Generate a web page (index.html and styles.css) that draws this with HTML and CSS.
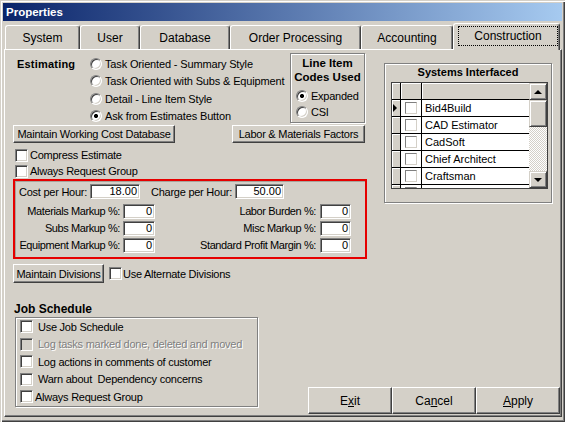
FILE: index.html
```html
<!DOCTYPE html>
<html>
<head>
<meta charset="utf-8">
<title>Properties</title>
<link rel="stylesheet" href="styles.css">
</head>
<body>
<div class="window">
  <div class="titlebar">Properties</div>
  <div class="tabs">
    <div class="tab tab-system">System</div>
    <div class="tab tab-user">User</div>
    <div class="tab tab-database">Database</div>
    <div class="tab tab-order">Order Processing</div>
    <div class="tab tab-accounting">Accounting</div>
    <div class="tab tab-construction active"><span class="focus">Construction</span></div>
  </div>
  <div class="panel">
    <div class="top">
      <div class="left">
        <div class="est-row">
          <div class="est-label">Estimating</div>
          <div class="radio-list">
            <div class="opt"><span class="radio"></span>Task Oriented - Summary Style</div>
            <div class="opt"><span class="radio"></span>Task Oriented with Subs &amp; Equipment</div>
            <div class="opt"><span class="radio"></span>Detail - Line Item Style</div>
            <div class="opt"><span class="radio checked"></span>Ask from Estimates Button</div>
          </div>
          <div class="lineitem">
            <div class="lineitem-title">Line Item<br>Codes Used</div>
            <div class="opt li-opt"><span class="radio checked"></span>Expanded</div>
            <div class="opt li-opt"><span class="radio"></span>CSI</div>
          </div>
        </div>
        <div class="btn-row">
          <div class="btn btn-wcd">Maintain Working Cost Database</div>
          <div class="btn btn-lmf">Labor &amp; Materials Factors</div>
        </div>
        <div class="check-row first"><span class="cb"></span>Compress Estimate</div>
        <div class="check-row"><span class="cb"></span>Always Request Group</div>
        <div class="rates">
          <div class="rate-row1">
            <span class="lbl-cost">Cost per Hour:</span>
            <span class="input in-cost">18.00</span>
            <span class="lbl-charge">Charge per Hour:</span>
            <span class="input in-charge">50.00</span>
          </div>
          <div class="rate-grid">
            <span class="lbl-a">Materials Markup %:</span>
            <span class="input">0</span>
            <span class="lbl-b">Labor Burden %:</span>
            <span class="input">0</span>
            <span class="lbl-a">Subs Markup %:</span>
            <span class="input">0</span>
            <span class="lbl-b">Misc Markup %:</span>
            <span class="input">0</span>
            <span class="lbl-a">Equipment Markup %:</span>
            <span class="input">0</span>
            <span class="lbl-b">Standard Profit Margin %:</span>
            <span class="input">0</span>
          </div>
        </div>
        <div class="div-row">
          <div class="btn btn-div">Maintain Divisions</div>
          <span class="cb cb-div"></span>Use Alternate Divisions
        </div>
      </div>
      <div class="right">
        <div class="sys-title">Systems Interfaced</div>
        <div class="grid">
          <div class="cells">
            <div class="grow head"><span class="c-ind"></span><span class="c-chk"></span><span class="c-name"></span></div>
            <div class="grow"><span class="c-ind"><span class="arrow"></span></span><span class="c-chk"><span class="gcb"></span></span><span class="c-name">Bid4Build</span></div>
            <div class="grow"><span class="c-ind"></span><span class="c-chk"><span class="gcb"></span></span><span class="c-name">CAD Estimator</span></div>
            <div class="grow"><span class="c-ind"></span><span class="c-chk"><span class="gcb"></span></span><span class="c-name">CadSoft</span></div>
            <div class="grow"><span class="c-ind"></span><span class="c-chk"><span class="gcb"></span></span><span class="c-name">Chief Architect</span></div>
            <div class="grow"><span class="c-ind"></span><span class="c-chk"><span class="gcb"></span></span><span class="c-name">Craftsman</span></div>
            <div class="grow"><span class="c-ind"></span><span class="c-chk"><span class="gcb"></span></span><span class="c-name"></span></div>
          </div>
          <div class="scroll">
            <div class="sb-btn"><span class="tri-up"></span></div>
            <div class="sb-thumb"></div>
            <div class="sb-track"></div>
            <div class="sb-btn"><span class="tri-down"></span></div>
          </div>
        </div>
      </div>
    </div>
    <div class="bottom">
      <div class="job">
        <div class="job-label">Job Schedule</div>
        <div class="jobbox">
          <div class="job-row"><span class="cb"></span>Use Job Schedule</div>
          <div class="job-row disabled"><span class="cb"></span>Log tasks marked done, deleted and moved</div>
          <div class="job-row"><span class="cb"></span>Log actions in comments of customer</div>
          <div class="job-row"><span class="cb"></span>Warn about &nbsp;Dependency concerns</div>
          <div class="job-row tight"><span class="cb"></span>Always Request Group</div>
        </div>
      </div>
      <div class="dlg-buttons">
        <div class="dbtn">E<u>x</u>it</div>
        <div class="dbtn">Ca<u>n</u>cel</div>
        <div class="dbtn"><u>A</u>pply</div>
      </div>
    </div>
  </div>
</div>
</body>
</html>
```

FILE: styles.css
```css
* { box-sizing: border-box; }
html, body { margin: 0; padding: 0; }
body {
  width: 565px;
  height: 422px;
  overflow: hidden;
  background: #d4d0c8;
  font-family: "Liberation Sans", Arial, sans-serif;
  font-size: 11px;
  letter-spacing: -0.25px;
  color: #000;
}
.window {
  width: 565px;
  height: 422px;
  background: #d4d0c8;
  padding: 3px 3px 5px 3px;
  display: flex;
  flex-direction: column;
  box-shadow: inset 1px 1px 0 #d4d0c8, inset 2px 2px 0 #fff, inset -1px -1px 0 #404040, inset -2px -2px 0 #808080;
}
.titlebar {
  flex: none;
  height: 18px;
  line-height: 18px;
  background: linear-gradient(to right, #0a246a, #a6caf0);
  color: #fff;
  font-weight: bold;
  font-size: 11.5px;
  letter-spacing: 0;
  padding-left: 3px;
}
.tabs {
  flex: none;
  display: flex;
  align-items: flex-end;
  height: 26px;
  margin-top: 2px;
  padding-left: 2px;
}
.tab {
  height: 24px;
  display: flex;
  align-items: center;
  justify-content: center;
  font-size: 12px;
  letter-spacing: 0;
  border-top: 1px solid #fff;
  border-left: 1px solid #fff;
  border-right: 1px solid #404040;
  box-shadow: inset -1px 0 0 #808080;
  border-radius: 3px 3px 0 0;
  padding-top: 1px;
}
.tab-system { width: 75px; }
.tab-user { width: 60px; }
.tab-database { width: 90px; }
.tab-order { width: 131px; }
.tab-accounting { width: 92px; }
.tab-construction { width: 107px; }
.tab.active {
  height: 27px;
  margin-bottom: -1px;
  position: relative;
  z-index: 1;
  background: #d4d0c8;
  align-items: flex-start;
  justify-content: flex-start;
  padding-top: 0;
}
.focus {
  margin: 2px 0 0 4px;
  width: 100px;
  height: 20px;
  border: 1px dotted #000;
  display: flex;
  align-items: center;
  justify-content: center;
}
.panel {
  flex: none;
  height: 368px;
  margin-left: 1px;
  border-top: 1px solid #fff;
  border-left: 1px solid #fff;
  border-right: 1px solid #404040;
  border-bottom: 1px solid #404040;
  box-shadow: inset -1px -1px 0 #808080;
  padding: 3px 1px 1px 8px;
  display: flex;
  flex-direction: column;
}
.top { display: flex; align-items: flex-start; flex: none; }
.left { width: 354px; display: flex; flex-direction: column; }
.est-row { display: flex; height: 70px; }
.est-label {
  width: 77px;
  padding-left: 4px;
  margin-top: 4px;
  line-height: 14px;
  font-weight: bold;
  letter-spacing: 0.2px;
}
.radio-list { width: 200px; padding-top: 2px; letter-spacing: -0.15px; }
.opt {
  display: flex;
  align-items: center;
  height: 17.5px;
  white-space: nowrap;
}
.radio {
  flex: none;
  width: 12px;
  height: 12px;
  border-radius: 50%;
  margin-right: 3px;
  background: #fff;
  border: 1px solid;
  border-color: #808080 #fff #fff #808080;
  box-shadow: inset 1px 1px 0 #404040, inset -1px -1px 0 #d4d0c8;
}
.radio.checked { background: radial-gradient(circle, #000 0 1.8px, #fff 2.3px); }
.lineitem {
  width: 75px;
  border: 1px solid #808080;
  box-shadow: inset 1px 1px 0 #fff, 1px 1px 0 #fff;
  padding-top: 2px;
}
.lineitem-title {
  font-weight: bold;
  font-size: 11.5px;
  letter-spacing: 0;
  line-height: 14px;
  text-align: center;
  margin-bottom: 4px;
}
.li-opt { height: 16px; padding-left: 5px; }
.btn-row {
  display: flex;
  justify-content: space-between;
  margin-top: 2px;
  padding-right: 2px;
}
.btn {
  height: 18px;
  display: flex;
  align-items: center;
  justify-content: center;
  background: #d4d0c8;
  border: 1px solid;
  border-color: #fff #404040 #404040 #fff;
  box-shadow: inset -1px -1px 0 #808080;
  white-space: nowrap;
}
.btn-wcd { width: 162px; }
.btn-lmf { width: 133px; }
.check-row {
  display: flex;
  align-items: center;
  height: 16px;
  padding-left: 2px;
  white-space: nowrap;
}
.check-row.first { margin-top: 4px; }
.cb {
  flex: none;
  width: 13px;
  height: 13px;
  margin-right: 2px;
  background: #fff;
  border: 1px solid;
  border-color: #808080 #fff #fff #808080;
  box-shadow: inset 1px 1px 0 #404040, inset -1px -1px 0 #d4d0c8;
}
.rates {
  height: 80px;
  border: 2px solid #e60000;
  box-shadow: inset 1px 1px 0 #a8a49c;
  padding: 3px 0 4px 0;
}
.rate-row1 {
  display: flex;
  align-items: center;
  height: 15px;
  padding-left: 4px;
  white-space: nowrap;
}
.lbl-cost { width: 71px; }
.in-cost { width: 50px; }
.lbl-charge { width: 84px; margin-left: 11px; }
.in-charge { width: 49px; }
.input {
  display: block;
  height: 15px;
  line-height: 13px;
  background: #fff;
  border: 1px solid;
  border-color: #808080 #fff #fff #808080;
  box-shadow: inset 1px 1px 0 #404040, inset -1px -1px 0 #d4d0c8;
  text-align: right;
  padding-right: 2px;
  letter-spacing: 0;
}
.rate-grid {
  display: grid;
  grid-template-columns: 108px 32px 165px 31px;
  grid-auto-rows: 15px;
  row-gap: 2px;
  margin-top: 5px;
}
.lbl-a, .lbl-b {
  text-align: right;
  line-height: 15px;
  white-space: nowrap;
  letter-spacing: -0.4px;
}
.lbl-a { padding-right: 3px; }
.lbl-b { padding-right: 4px; }
.div-row {
  display: flex;
  align-items: center;
  height: 19px;
  margin-top: 5px;
  white-space: nowrap;
}
.btn-div { width: 91px; height: 19px; }
.cb-div { margin-left: 5px; margin-right: 1px; }
.right {
  margin-left: 17px;
  margin-top: 10px;
  width: 168px;
  height: 140px;
  border: 1px solid #808080;
  box-shadow: inset 1px 1px 0 #fff, 1px 1px 0 #fff;
  padding-top: 2px;
}
.sys-title {
  text-align: center;
  font-weight: bold;
  letter-spacing: 0;
  line-height: 13px;
}
.grid {
  display: flex;
  width: 157px;
  height: 107px;
  margin: 3px 0 0 6px;
  border: 1px solid #404040;
  overflow: hidden;
}
.cells { flex: 1; overflow: hidden; }
.grow {
  display: flex;
  height: 17px;
  border-bottom: 1px solid #000;
}
.c-ind {
  width: 9px;
  flex: none;
  background: #d4d0c8;
  border-right: 1px solid #000;
  box-shadow: inset 1px 1px 0 #fff;
  display: flex;
  align-items: center;
}
.c-chk {
  width: 21px;
  flex: none;
  background: #fff;
  border-right: 1px solid #000;
  display: flex;
  align-items: center;
  justify-content: center;
}
.c-name {
  flex: 1;
  background: #fff;
  padding-left: 3px;
  line-height: 16px;
  white-space: nowrap;
  letter-spacing: 0;
}
.head .c-chk, .head .c-name {
  background: #d4d0c8;
  box-shadow: inset 1px 1px 0 #fff;
}
.gcb {
  width: 12px;
  height: 12px;
  background: #fff;
  border: 1px solid;
  border-color: #808080 #d4d0c8 #d4d0c8 #808080;
}
.arrow {
  width: 0;
  height: 0;
  margin-left: 1px;
  border-left: 4px solid #000;
  border-top: 4px solid transparent;
  border-bottom: 4px solid transparent;
}
.scroll {
  width: 18px;
  flex: none;
  display: flex;
  flex-direction: column;
}
.sb-btn, .sb-thumb {
  background: #d4d0c8;
  border: 1px solid;
  border-color: #d4d0c8 #404040 #404040 #d4d0c8;
  box-shadow: inset 1px 1px 0 #fff, inset -1px -1px 0 #808080;
}
.sb-btn {
  height: 17px;
  flex: none;
  display: flex;
  align-items: center;
  justify-content: center;
}
.sb-thumb { height: 27px; flex: none; }
.sb-track {
  flex: 1;
  background-color: #d4d0c8;
  background-image: repeating-conic-gradient(#fff 0 25%, #d4d0c8 0 50%);
  background-size: 2px 2px;
}
.tri-up {
  width: 0; height: 0;
  border-left: 4px solid transparent;
  border-right: 4px solid transparent;
  border-bottom: 4px solid #000;
}
.tri-down {
  width: 0; height: 0;
  border-left: 4px solid transparent;
  border-right: 4px solid transparent;
  border-top: 4px solid #000;
}
.bottom { flex: 1; display: flex; }
.job { margin-top: 19px; padding-left: 1px; }
.job-label {
  font-weight: bold;
  font-size: 12px;
  letter-spacing: 0;
  line-height: 14px;
}
.jobbox {
  width: 243px;
  margin: 1px 0 0 1px;
  border: 1px solid #808080;
  box-shadow: inset 1px 1px 0 #fff, 1px 1px 0 #fff;
  padding-left: 4px;
}
.job-row {
  display: flex;
  align-items: center;
  height: 17.5px;
  white-space: nowrap;
}
.job-row .cb { margin-right: 5px; }
.job-row.tight .cb { margin-right: 2px; }
.job-row.disabled { color: #808080; text-shadow: 1px 1px 0 #fff; }
.job-row.disabled .cb { background: #d4d0c8; }
.dlg-buttons {
  margin-left: auto;
  align-self: flex-end;
  display: flex;
  margin-bottom: 1px;
}
.dbtn {
  width: 84px;
  height: 27px;
  display: flex;
  align-items: center;
  justify-content: center;
  font-size: 12px;
  letter-spacing: 0;
  background: #d4d0c8;
  border: 1px solid;
  border-color: #fff #404040 #404040 #fff;
  box-shadow: inset -1px -1px 0 #808080;
}
```
